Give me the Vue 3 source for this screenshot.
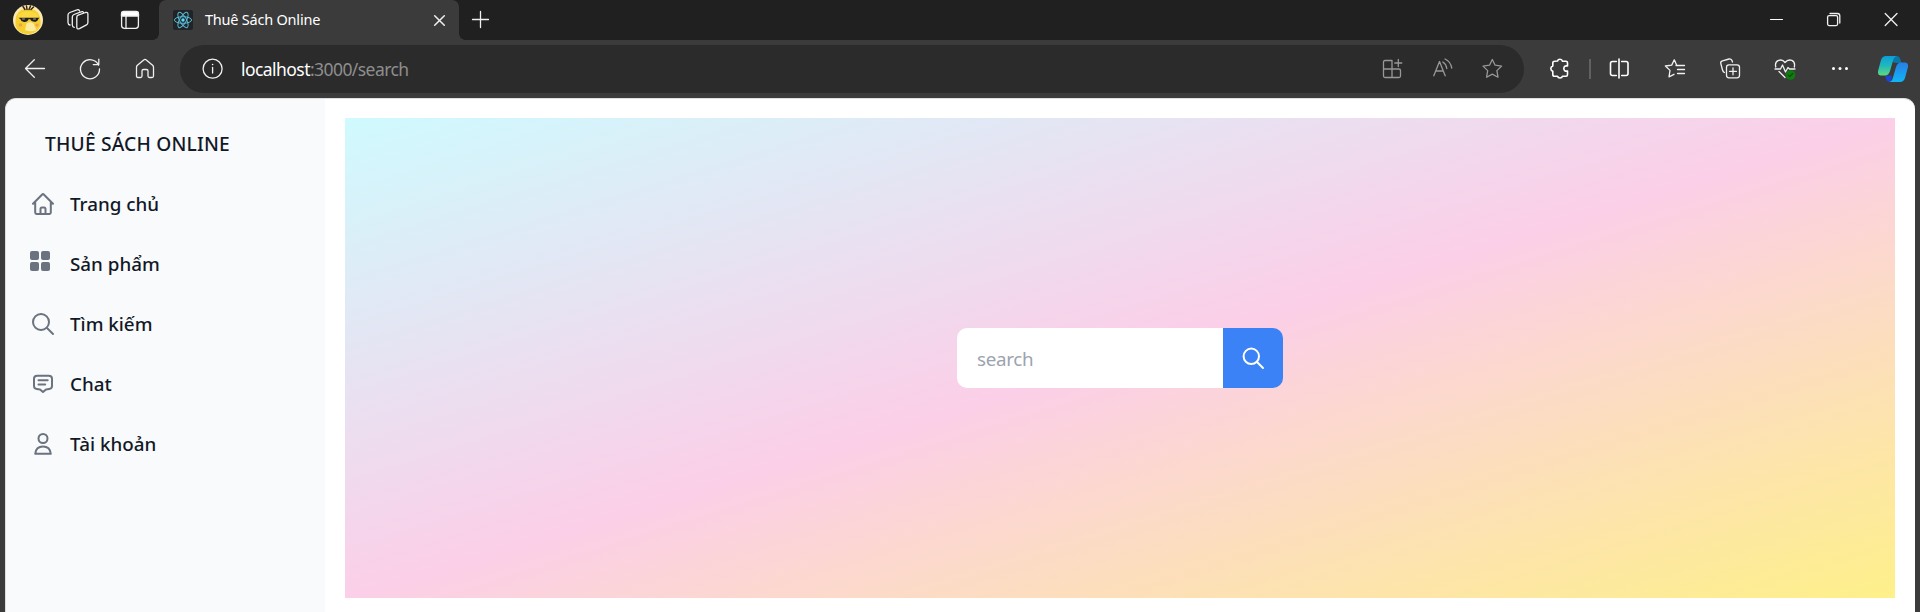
<script setup>
const navItems = [
  { id: 'home', label: 'Trang chủ' },
  { id: 'products', label: 'Sản phẩm' },
  { id: 'search', label: 'Tìm kiếm' },
  { id: 'chat', label: 'Chat' },
  { id: 'account', label: 'Tài khoản' },
]
</script>

<template>
  <div class="window">
    <header class="tabstrip">
      <svg class="ico avatar" viewBox="0 0 30 30">
        <g stroke="none">
          <circle cx="15" cy="15" r="15" fill="#fbe9ae" />
          <path d="M2.500 21Q1.500 8 8.500 5 15 2.500 21.500 5 28.500 9 27.500 21 23 29 15 29 6 29 2.500 21Z" fill="#f5cf2e" />
          <path d="M5 10Q15 2 25 10V13H5Z" fill="#f9d93f" />
          <circle cx="7.500" cy="20" r="1.800" fill="#f2a24c" /><circle cx="24" cy="20" r="1.600" fill="#f2a24c" />
          <path d="M13.500 18.500Q17 16 20.500 18.500L23.500 25Q18 27.500 12 25Z" fill="#fbeaa0" />
        </g>
        <path d="M10 1.500 12 4.500M13.500 1 14 4.500M17.500 1 16 4.500M20.500 2 18 4.500" stroke="#33261a" stroke-width="1.500" />
        <path d="M5.500 12.700H26.500L25.300 14Q24.500 17 21 16.800 18 16.500 17.200 14.300H15.500Q14.500 17.300 11 17 8 16.800 7.300 14Z" fill="#241f20" stroke="none" />
        <path d="M9.500 14h2M20.500 14h2" stroke="#ccc" stroke-width=".8" />
      </svg>
      <svg class="ico workspaces" viewBox="0 0 30 30">
        <path d="M13.800 12.200Q13.800 10.800 15.200 10.200L22.500 7.500Q24.900 7 24.900 9V17.500Q24.900 19.300 23.500 19.900L16.400 23.600Q13.800 24.700 13.800 22Z" />
        <path d="M20.500 5.600Q20 4 18 4.800L11 7.500Q9.300 8.200 9.300 10V18Q9.300 20 11.200 20.300M16.500 3.800Q15.700 2.200 14 2.900L6.800 5.500Q5 6.200 5 8V15.500Q5 17.600 7 18" transform="translate(0 2)" />
      </svg>
      <svg class="ico tabmenu" viewBox="0 0 30 30">
        <rect x="6.600" y="6.600" width="16.800" height="16.800" rx="2.800" />
        <path d="M6.500 11V9Q6.500 6.500 9 6.500H21Q23.500 6.500 23.500 9V11Z" fill="#fff" /><path d="M11 11V23.500" />
      </svg>
      <div class="tab">
        <svg class="favicon" viewBox="0 0 20 20">
          <rect width="20" height="20" rx="2" fill="#202428" />
          <g fill="none" stroke="#58b9d2" stroke-width="1">
            <ellipse cx="10" cy="10" rx="8.600" ry="3.300" />
            <ellipse cx="10" cy="10" rx="8.600" ry="3.300" transform="rotate(60 10 10)" />
            <ellipse cx="10" cy="10" rx="8.600" ry="3.300" transform="rotate(120 10 10)" />
          </g>
          <circle cx="10" cy="10" r="1.700" fill="#61dafb" />
        </svg>
        <span class="tab-title">Thuê Sách Online</span>
        <svg class="ico tab-close" viewBox="0 0 30 30"><path d="M10.700 10.700 20.300 20.300M20.300 10.700 10.700 20.300" stroke-width="1.500" /></svg>
      </div>
      <svg class="ico newtab" viewBox="0 0 30 30"><path d="M15.500 6.500V22.500M7.500 14.500H23.500" /></svg>
      <div class="controls">
        <svg class="ico" viewBox="0 0 30 30"><path d="M8.500 14.500H20.500" stroke-width="1" stroke="#fff" /></svg>
        <svg class="ico" viewBox="0 0 30 30"><rect x="8.600" y="10.600" width="10" height="10" rx="1.500" /><path d="M11 8.500H18.500Q20.800 8.500 20.800 11V18" /></svg>
        <svg class="ico" viewBox="0 0 30 30"><path d="M9.200 8.500 21 20.500M21 8.500 9.200 20.500" /></svg>
      </div>
    </header>

    <div class="toolbar">
      <div class="nav-buttons">
        <svg class="ico" viewBox="0 0 30 30"><path d="M14.300 5.800 5.500 14.500 14.300 23.200M5.500 14.500H24.500" /></svg>
        <svg class="ico" viewBox="0 0 30 30"><path d="M23.600 11.200A9.500 9.500 0 1 0 24.500 15M23.800 5.200V10.600H18.300" /></svg>
        <svg class="ico" viewBox="0 0 30 30"><path d="M6.500 13.200Q6.500 12 7.400 11.200L13.700 5.900Q15 4.900 16.300 5.900L22.600 11.200Q23.500 12 23.500 13.200V22Q23.500 23.500 22 23.500H19.500Q18 23.500 18 22V17Q18 15.500 16.500 15.500H13.500Q12 15.500 12 17V22Q12 23.500 10.500 23.500H8Q6.500 23.500 6.500 22Z" /></svg>
      </div>
      <div class="address">
        <svg class="ico info" viewBox="0 0 30 30"><circle cx="14.600" cy="14.700" r="9.500" /><path d="M14.600 13.500V19" /><circle cx="14.600" cy="10.500" r=".8" fill="#fff" stroke="none" /></svg>
        <span class="url"><b>localhost</b>:3000/search</span>
        <div class="address-actions">
          <svg class="ico" viewBox="0 0 30 30"><path d="M14.500 6.500H8Q6.500 6.500 6.500 8V22Q6.500 23.500 8 23.500H22Q23.500 23.500 23.500 22V16.500Q23.500 15 22 15H6.500M15 6.500V23.500M21.300 5.500V12.500M17.800 9H24.800" /></svg>
          <svg class="ico" viewBox="0 0 30 30"><path d="M6.800 21.800 12.500 7.500 18.200 21.800M9 17H16M15.800 8Q19.200 10 19.800 14.500M18 5Q23.500 7.500 24.800 14" /></svg>
          <svg class="ico" viewBox="0 0 30 30"><path d="M15.300 5.500 18.100 11.200 24.600 12.100 19.900 16.600 21 23.200 15.300 20.100 9.600 23.200 10.700 16.600 6 12.100 12.500 11.200Z" /></svg>
        </div>
      </div>
      <div class="extensions">
        <svg class="ico bright" viewBox="0 0 30 30"><path d="M12.500 7Q13 5.200 15 5.200T17.500 7.200H21Q22.500 7.200 22.500 9V12Q19 11.200 18.800 14.500 19 17.800 22.500 17V20.500Q22.500 22.300 21 22.300H17.500Q17 24 15 24T12.500 22.300H9.500Q7.800 22.300 7.800 20.500V17.200Q5.800 16.500 5.800 14.600T7.800 12V9Q7.800 7.200 9.500 7.200Z" /></svg>
        <i class="divider"></i>
        <svg class="ico bright split" viewBox="0 0 30 30"><path d="M11.300 7.500H7.500Q5.500 7.500 5.500 9.500V19.500Q5.500 21.500 7.500 21.500H11.300M16.700 7.500H21Q23 7.500 23 9.500V19.500Q23 21.500 21 21.500H16.700M14 5V24" /></svg>
      </div>
      <div class="browser-actions">
        <svg class="ico" viewBox="0 0 30 30"><path d="M17.500 11.300H16.700L14.300 5.800 11.700 11.100 5.400 12 10 16.400 9 22.800 14 20.300M16 11.500H24.500M17.500 15.500H24.500M17.500 19.500H24.500" /></svg>
        <svg class="ico" viewBox="0 0 30 30"><rect x="11.500" y="10.800" width="13" height="13" rx="2.500" /><path d="M18 13.800V20.800M14.500 17.300H21.500M9.500 18.500Q8 18 7.500 16L5.800 9.500Q5.200 7.500 7.500 6.800L14 5Q16.500 4.500 17.200 7L17.500 8" /></svg>
        <svg class="ico" viewBox="0 0 30 30"><path d="M5.800 13Q4.500 8 8.500 6.400 12.500 5 15 8.500 18 5 21.800 6.400 25.500 8 24.300 13M5 15H10.500L12.500 11 15.500 18 18 13.500 19.500 15H25M9 17.500 15 23.500" /><circle cx="20.500" cy="21" r="4.800" fill="#107c10" stroke="none" /><path d="M18.300 21.200 19.800 22.600 22.700 19.500" stroke="#075107" /></svg>
        <svg class="ico" viewBox="0 0 30 30"><g fill="#fff" stroke="none"><circle cx="8.500" cy="14.500" r="1.500" /><circle cx="15" cy="14.500" r="1.500" /><circle cx="21.500" cy="14.500" r="1.500" /></g></svg>
      </div>
      <svg class="copilot" viewBox="0 0 30 28">
        <defs>
          <linearGradient id="cpA" x1="0" y1="0" x2="0" y2="1"><stop stop-color="#0c9cdb" /><stop offset=".5" stop-color="#20b9ba" /><stop offset="1" stop-color="#61d980" /></linearGradient>
          <linearGradient id="cpB" x1="0" y1="0" x2="0" y2="1"><stop stop-color="#287fe5" /><stop offset="1" stop-color="#10b5f5" /></linearGradient>
        </defs>
        <path d="M14 1H18.500Q21.500 1 22.500 5L23.500 8H18.500L14 7Z" fill="#0877a8" />
        <path d="M7 20.500H14L13 25.500Q12.500 27 11 27 9 27 8 24Z" fill="#1c44d6" />
        <path d="M8 1H19Q16 1.500 15 5.500L12 16Q10.500 20.500 7 20.500H3Q-1 20.500.3 15L3 5Q4.300 1 8 1Z" fill="url(#cpA)" />
        <path d="M22 27H11Q14 26.500 15 22.500L18 12Q19.500 7.500 23 7.500H27Q31 7.500 29.700 13L27 23Q25.700 27 22 27Z" fill="url(#cpB)" />
      </svg>
    </div>

    <div class="page">
      <aside class="sidebar">
        <h1>THUÊ SÁCH ONLINE</h1>
        <nav>
          <a v-for="item in navItems" :key="item.id" :class="item.id">
            <svg class="nav-icon" viewBox="0 0 30 30">
              <path v-if="item.id === 'home'" d="M5 14.800 14.200 5.500Q15 4.700 15.800 5.500L25 14.800M7.200 13V23.500Q7.200 24.900 8.500 24.900H21.500Q22.800 24.900 22.800 23.500V13M12.500 24.500V20Q12.500 18.500 14 18.500H16Q17.500 18.500 17.500 20V24.500" />
              <g v-else-if="item.id === 'products'" fill="#6b7280" stroke="none"><rect x="5" y="5" width="9" height="9" rx="2" /><rect x="16" y="5" width="9" height="9" rx="2" /><rect x="5" y="16" width="9" height="9" rx="2" /><rect x="16" y="16" width="9" height="9" rx="2" /></g>
              <g v-else-if="item.id === 'search'"><circle cx="13" cy="13" r="8" /><path d="M19 19 25 25" /></g>
              <path v-else-if="item.id === 'chat'" d="M9.200 6.700H20.800Q24 6.700 24 9.700V17Q24 19.700 21.200 20L18 20.400 15 23 12 20.400 8.800 20Q6 19.700 6 17V9.700Q6 6.700 9.200 6.700ZM10.500 11.300H19.700M10.500 15.500H17.200" />
              <g v-else><circle cx="15" cy="9.500" r="4.500" /><path d="M7.200 24.800Q8 17.500 15 17.500T22.800 24.800Z" /></g>
            </svg>
            <span>{{ item.label }}</span>
          </a>
        </nav>
      </aside>
      <main>
        <section class="hero">
          <form class="search-box" @submit.prevent>
            <input type="text" placeholder="search" />
            <button type="submit" aria-label="search">
              <svg viewBox="0 0 30 30"><circle cx="13.300" cy="13.300" r="7.700" /><path d="M19 19 25 25" /></svg>
            </button>
          </form>
        </section>
      </main>
    </div>
  </div>
</template>

<style>
body { overflow: hidden; }
</style>

<style scoped>
* { box-sizing: border-box; }
.window {
  width: 1920px; height: 612px; display: flex; flex-direction: column;
  background: #3b3b3b; font-family: "Noto Sans", "Open Sans", sans-serif; overflow: hidden;
}
svg { display: block; flex: none; }
.ico { width: 30px; height: 30px; fill: none; stroke: #f0f0f0; stroke-width: 1.3; stroke-linecap: round; stroke-linejoin: round; }
.bright { stroke: #fff; stroke-width: 1.6; }
.tabstrip { height: 40px; flex: none; display: flex; align-items: center; background: #202020; padding-left: 13px; }
.workspaces { margin-left: 20px; }
.tabmenu { margin-left: 22px; }
.tab {
  position: relative; width: 300px; height: 40px; margin-left: 14px; padding: 0 5px 0 14px; display: flex; align-items: center;
  background: #3b3b3b; border-radius: 7px 7px 0 0;
}
.tab::before, .tab::after { content: ""; position: absolute; bottom: 0; width: 6px; height: 6px; }
.tab::before { left: -6px; background: radial-gradient(circle at 0 0, #202020 5.5px, #3b3b3b 6px); }
.tab::after { right: -6px; background: radial-gradient(circle at 100% 0, #202020 5.5px, #3b3b3b 6px); }
.favicon { width: 20px; height: 20px; }
.tab-title { margin: -2px 0 0 12px; font-size: 14.5px; line-height: 20px; color: #fff; letter-spacing: -0.22px; white-space: nowrap; }
.tab-close { margin-left: auto; }
.newtab { margin-left: 6px; }
.controls { margin-left: auto; display: flex; gap: 27px; padding-right: 14px; }
.toolbar { height: 58px; flex: none; display: flex; align-items: center; padding-left: 20px; }
.nav-buttons { display: flex; gap: 25px; }
.address {
  width: 1344px; height: 48px; margin: 0 0 0 20px; padding: 0 17px 0 18px; border-radius: 24px;
  display: flex; align-items: center; background: #2b2b2b;
}
.url { margin: -1px 0 0 13px; font-size: 17.5px; line-height: 24px; color: #8e8e8e; letter-spacing: -0.56px; white-space: nowrap; }
.url b { font-weight: 400; color: #fff; }
.address-actions { margin-left: auto; display: flex; gap: 20px; }
.address-actions .ico { stroke: #989898; }
.extensions { margin-left: 21px; display: flex; align-items: center; }
.divider { width: 2px; height: 20px; margin: 0 14px; background: #616161; }
.browser-actions { margin-left: 25px; display: flex; gap: 25px; }
.copilot { width: 30px; height: 28px; margin-left: 23px; }
.page {
  flex: 1; margin: 0 5px; display: flex; background: #fff; overflow: hidden;
  border: 1px solid #dedede; border-bottom: 0; border-right: 0; border-radius: 11px 11px 0 0;
}
.sidebar { width: 319px; padding: 15px 20px 0 22px; background: #f9fafb; color: #111827; }
h1 { margin: 0; height: 60px; padding-left: 17px; font-size: 19.2px; font-weight: 500; line-height: 59px; letter-spacing: 0.2px; white-space: nowrap; }
nav a { height: 60px; display: flex; align-items: center; font-size: 18.8px; font-weight: 500; }
nav a span { margin: 0 0 0 12px; line-height: 26px; white-space: nowrap; }
.nav-icon { width: 30px; height: 30px; fill: none; stroke: #6b7280; stroke-width: 2; stroke-linecap: round; stroke-linejoin: round; }
.products .nav-icon { margin: -6px 3px 0 -3px; }
main { flex: 1; padding: 19px 20px 0; }
.hero {
  width: 1550px; height: 480px; display: flex; align-items: center; justify-content: center;
  background: linear-gradient(to bottom right, #cffafe, #fbcfe8, #fef08a);
}
.search-box { display: flex; width: 326px; height: 60px; border-radius: 10px; overflow: hidden; }
input { width: 266px; padding: 1px 20px 0; border: 0; outline: 0; font: 400 18.8px "Noto Sans", sans-serif; letter-spacing: -0.3px; background: #fff; }
input::placeholder { color: #9ca3af; opacity: 1; }
button { width: 60px; padding: 0 15px; border: 0; background: #3b82f6; }
button svg { width: 30px; height: 30px; fill: none; stroke: #fff; stroke-width: 2; stroke-linecap: round; }
</style>
